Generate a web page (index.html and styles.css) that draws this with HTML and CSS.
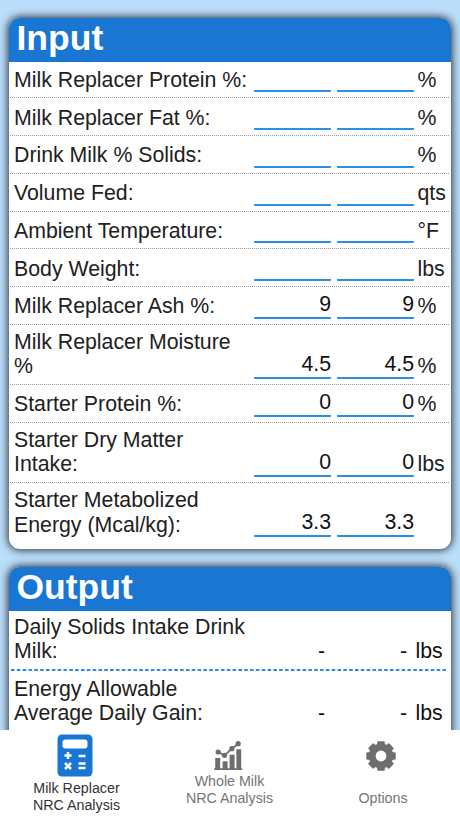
FILE: index.html
```html
<!DOCTYPE html>
<html lang="en">
<head>
<meta charset="utf-8">
<title>NRC Analysis</title>
<link rel="stylesheet" href="styles.css">
</head>
<body>
<main class="content">
  <section class="card">
    <h2 class="title">Input</h2>
    <div class="row first"><span class="label">Milk Replacer Protein %:</span><span class="field"></span><span class="field"></span><span class="unit">%</span></div>
    <div class="row"><span class="label">Milk Replacer Fat %:</span><span class="field"></span><span class="field"></span><span class="unit">%</span></div>
    <div class="row"><span class="label">Drink Milk % Solids:</span><span class="field"></span><span class="field"></span><span class="unit">%</span></div>
    <div class="row"><span class="label">Volume Fed:</span><span class="field"></span><span class="field"></span><span class="unit">qts</span></div>
    <div class="row"><span class="label">Ambient Temperature:</span><span class="field"></span><span class="field"></span><span class="unit">°F</span></div>
    <div class="row"><span class="label">Body Weight:</span><span class="field"></span><span class="field"></span><span class="unit">lbs</span></div>
    <div class="row"><span class="label">Milk Replacer Ash %:</span><span class="field">9</span><span class="field">9</span><span class="unit">%</span></div>
    <div class="row tall"><span class="label">Milk Replacer Moisture<br>%</span><span class="field">4.5</span><span class="field">4.5</span><span class="unit">%</span></div>
    <div class="row"><span class="label">Starter Protein %:</span><span class="field">0</span><span class="field">0</span><span class="unit">%</span></div>
    <div class="row tall"><span class="label">Starter Dry Matter<br>Intake:</span><span class="field">0</span><span class="field">0</span><span class="unit">lbs</span></div>
    <div class="row last"><span class="label">Starter Metabolized<br>Energy (Mcal/kg):</span><span class="field">3.3</span><span class="field">3.3</span><span class="unit"></span></div>
  </section>
  <section class="card output">
    <h2 class="title">Output</h2>
    <div class="result"><span class="label">Daily Solids Intake Drink<br>Milk:</span><span class="value">-</span><span class="value">-</span><span class="unit">lbs</span></div>
    <svg class="divider" viewBox="0 0 442 2"><path d="M2 1H438" stroke="#2b8bdc" stroke-width="2" stroke-dasharray="3.6 2.23"/></svg>
    <div class="result"><span class="label">Energy Allowable<br>Average Daily Gain:</span><span class="value">-</span><span class="value">-</span><span class="unit">lbs</span></div>
  </section>
</main>
<nav class="tabs">
  <a class="tab active">
    <svg class="calc" viewBox="0 0 36 43"><rect x=".5" y=".5" width="35" height="42" rx="4.5" fill="#1976d2"/><rect x="5.5" y="5.5" width="25" height="9" rx="3" fill="#fff"/><g stroke="#fff" stroke-width="2.5" fill="none"><path d="M7.5 21.5h7M11 18v7M21.5 22h7M21.5 29.5h7M21.5 34h7M8 29l6 6M14 29l-6 6"/></g></svg>
    <span>Milk Replacer<br>NRC Analysis</span>
  </a>
  <a class="tab whole">
    <svg class="chart" viewBox="0 0 30 30"><g fill="#6e6e6e"><path d="M1.2 28.3h28v1.6h-28zM2.2 18h5v11h-5zM9.6 21.3h5V29h-5zM16.6 14.7h5V29h-5zM23.4 9.3h4.8V29h-4.8z"/><circle cx="5.2" cy="12" r="2.6"/><circle cx="11.5" cy="15.3" r="2.6"/><circle cx="18.8" cy="8.7" r="2.6"/><circle cx="25.2" cy="3.7" r="2.6"/></g><path d="M5.2 12l6.3 3.3 7.3-6.6 6.4-5" fill="none" stroke="#6e6e6e" stroke-width="1.8"/></svg>
    <span>Whole Milk<br>NRC Analysis</span>
  </a>
  <a class="tab options">
    <svg class="gear" viewBox="0 0 30 30"><g fill="#6e6e6e"><rect x="11.2" y=".3" width="7.6" height="29.4" rx="1.2"/><rect x="11.2" y=".3" width="7.6" height="29.4" rx="1.2" transform="rotate(45 15 15)"/><rect x="11.2" y=".3" width="7.6" height="29.4" rx="1.2" transform="rotate(90 15 15)"/><rect x="11.2" y=".3" width="7.6" height="29.4" rx="1.2" transform="rotate(135 15 15)"/><circle cx="15" cy="15" r="12.4"/></g><circle cx="15" cy="15" r="5.4" fill="#fff"/></svg>
    <span>Options</span>
  </a>
</nav>
</body>
</html>
```
FILE: styles.css
```css
* { box-sizing: border-box; }
body {
  margin: 0;
  height: 818px;
  overflow: hidden;
  display: flex;
  flex-direction: column;
  background: #bbdefb;
  color: #212121;
  font: 21.3px/24.4px "Liberation Sans", Arial, sans-serif;
}
.content {
  height: 730px;
  padding: 18px 9px 0;
  overflow: hidden;
}
.card {
  height: 531px;
  margin-bottom: 18px;
  border-radius: 11px;
  background: #fff;
  overflow: hidden;
  box-shadow: 0 0 9px 1px rgba(0, 0, 0, .8);
}
.title {
  margin: 0;
  height: 44.4px;
  padding-left: 7.5px;
  background: #1976d2;
  color: #fff;
  font-size: 35.5px;
  font-weight: bold;
  line-height: 41px;
}
.row {
  display: grid;
  grid-template-columns: 234px 77.5px 77.5px 1fr;
  column-gap: 5.5px;
  align-items: end;
  height: 37.75px;
  margin: 0 2px 0 1px;
  padding: 0 0 5px 4px;
  border-bottom: 1px dotted #999;
}
.row.first { height: 36px; }
.row.tall { height: 60px; }
.row.last { height: 54.5px; padding-bottom: 0; border: 0; }
.label { white-space: nowrap; }
.row .unit { margin-left: -2px; white-space: nowrap; }
.row .label { margin-right: -4px; }
.field {
  height: 27px;
  border-bottom: 2px solid #2b8fe3;
  border-radius: 1px;
  color: #111;
  text-align: right;
  line-height: 24px;
}
.result {
  display: grid;
  grid-template-columns: 238px 73px 82px 1fr;
  align-items: end;
  height: 58px;
  padding: 3px 0 5.5px 5px;
}
.value { text-align: right; color: #111; }
.result .unit { padding-left: 8.5px; color: #111; }
.divider { display: block; width: 442px; height: 2px; margin-bottom: 2px; }
.tabs {
  display: grid;
  grid-template-columns: 153px 153px 154px;
  height: 88px;
  background: #fff;
  color: #757575;
  font-size: 14.25px;
  line-height: 16.6px;
  text-align: center;
}
.tab { display: flex; flex-direction: column; align-items: center; }
.active { color: #333; }
.calc { width: 36px; height: 43px; margin: 4px 4px 3.4px 0; }
.chart { width: 30px; height: 30px; margin: 10px 4px 3.4px 0; }
.gear { width: 30px; height: 30px; margin: 10.5px 4px 19.4px 0; }
```
